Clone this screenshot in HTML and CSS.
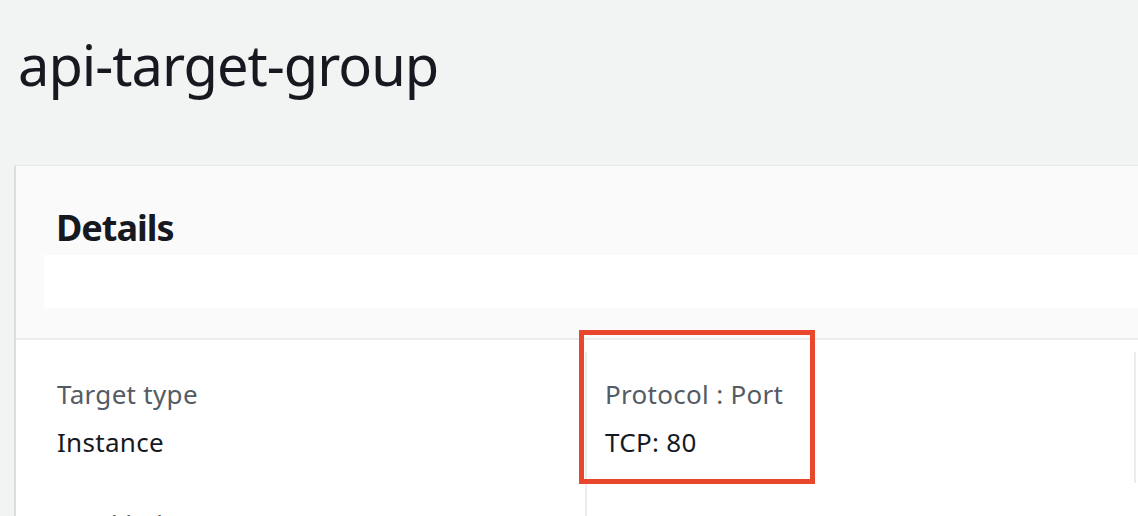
FILE: index.html
```html
<!DOCTYPE html>
<html lang="en">
<head>
<meta charset="utf-8">
<title>api-target-group</title>
<link rel="stylesheet" href="styles.css">
</head>
<body>
<div class="page">
  <header class="page-head">
    <h1 class="title">api-target-group</h1>
  </header>
  <section class="card">
    <div class="card-head">
      <h2 class="card-title">Details</h2>
      <div class="card-desc"></div>
    </div>
    <div class="card-body">
      <div class="col col-first">
        <div class="item">
          <div class="label">Target type</div>
          <div class="value">Instance</div>
        </div>
        <div class="item item-next">
          <div class="label">Load balancer</div>
        </div>
      </div>
      <div class="col col-mid">
        <div class="item">
          <div class="label">Protocol : Port</div>
          <div class="value">TCP: 80</div>
        </div>
      </div>
      <div class="col col-last"></div>
    </div>
  </section>
  <div class="highlight"></div>
</div>
</body>
</html>
```

FILE: styles.css
```css
html, body {
  margin: 0;
  padding: 0;
  overflow: hidden;
}
body {
  background: #f2f3f3;
  font-family: "Noto Sans", "Open Sans", sans-serif;
  color: #16191f;
}
.page {
  position: relative;
  width: 1138px;
  height: 516px;
  overflow: hidden;
}
.page-head {
  padding: 26px 0 0 18px;
}
.title {
  margin: 0;
  font-size: 56px;
  line-height: 76px;
  font-weight: 400;
  letter-spacing: -1px;
  color: #16191f;
}
.card {
  margin: 63px -40px 0 14px;
  border-left: 2px solid #d9dede;
  border-top: 1px solid #e7eaea;
  background: #ffffff;
}
.card-head {
  background: #fafafa;
  padding: 38px 0 30px 28px;
  border-bottom: 2px solid #eaeded;
}
.card-title {
  margin: 0 0 3px 12px;
  font-size: 36px;
  line-height: 48px;
  font-weight: 700;
  letter-spacing: -1px;
  color: #16191f;
}
.card-desc {
  height: 53px;
  background: #ffffff;
}
.card-body {
  display: grid;
  grid-template-columns: 528px 549px 1fr;
  padding: 12px 0 0 41px;
  height: 220px;
}
.col {
  padding-top: 24px;
}
.col-mid {
  border-left: 2px solid #eaeded;
  padding-left: 18px;
}
.col-last {
  border-left: 2px solid #eaeded;
  align-self: start;
  height: 107px;
}
.item {
  display: flex;
  flex-direction: column;
  gap: 12px;
}
.item-next {
  margin-top: 46px;
}
.label {
  font-size: 26px;
  line-height: 36px;
  letter-spacing: 0.3px;
  color: #545b64;
}
.value {
  font-size: 26px;
  line-height: 36px;
  letter-spacing: 0.3px;
  color: #16191f;
}
.highlight {
  position: absolute;
  left: 579px;
  top: 330px;
  width: 236px;
  height: 154px;
  box-sizing: border-box;
  border: 5px solid #e9472d;
}
```
